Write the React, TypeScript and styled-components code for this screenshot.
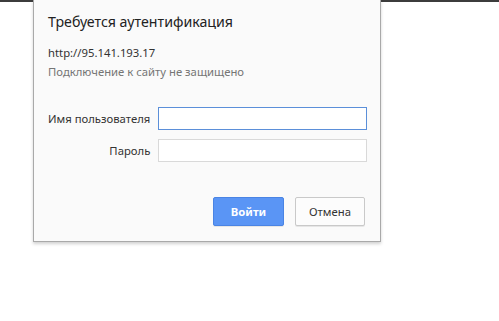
import React from 'react';
import styled, { createGlobalStyle } from 'styled-components';

const GlobalStyle = createGlobalStyle`
  html, body {
    margin: 0;
    padding: 0;
    background: #ffffff;
  }
  body {
    font-family: "Noto Sans", "Open Sans", Arial, sans-serif;
    width: 499px;
    height: 321px;
    overflow: hidden;
  }
`;

const Page = styled.div`
  position: relative;
  width: 499px;
  height: 321px;
  background: #ffffff;
`;

const TopBar = styled.div`
  height: 2px;
  background: #3c3c3c;
`;

const Dialog = styled.div`
  position: absolute;
  left: 33px;
  top: 0;
  width: 348px;
  height: 242px;
  background: #fafafa;
  border: 1px solid #a9a9a9;
  border-top: none;
  box-shadow: 0 2px 3px rgba(0, 0, 0, 0.18);
  padding: 12px 13px 0 14px;
  box-sizing: border-box;
  display: flex;
  flex-direction: column;
`;

const Title = styled.h1`
  margin: 0;
  font-size: 14.2px;
  line-height: 20px;
  font-weight: 400;
  color: #222222;
`;

const Origin = styled.div`
  margin-top: 13px;
  font-size: 11.3px;
  line-height: 16px;
  color: #333333;
`;

const Warning = styled.div`
  margin-top: 3px;
  font-size: 11.3px;
  line-height: 16px;
  color: #757575;
`;

const Form = styled.div`
  margin-top: 27px;
  display: grid;
  grid-template-columns: 1fr 209px;
  column-gap: 8px;
  row-gap: 9px;
  align-items: center;
`;

const Label = styled.label`
  font-size: 11.3px;
  color: #333333;
  text-align: right;
  white-space: nowrap;
`;

const Field = styled.input<{ $focused?: boolean }>`
  box-sizing: border-box;
  height: 23px;
  width: 209px;
  margin: 0;
  padding: 2px 4px;
  background: #ffffff;
  border: 1px solid ${p => (p.$focused ? '#5b8fd9' : '#d9d9d9')};
  border-radius: 0;
  outline: none;
  font-size: 12px;
`;

const Actions = styled.div`
  margin-top: 35px;
  display: flex;
  justify-content: flex-end;
  gap: 11px;
  padding-right: 2px;
`;

const Button = styled.button<{ $primary?: boolean }>`
  box-sizing: border-box;
  height: 29px;
  width: ${p => (p.$primary ? '71px' : '70px')};
  border-radius: 2px;
  font-family: inherit;
  font-size: 11.3px;
  font-weight: ${p => (p.$primary ? 700 : 400)};
  color: ${p => (p.$primary ? '#ffffff' : '#333333')};
  background: ${p => (p.$primary ? '#5a95f5' : '#fcfcfc')};
  border: 1px solid ${p => (p.$primary ? '#4a84e4' : '#c9c9c9')};
  box-shadow: 0 1px 0 rgba(0, 0, 0, 0.08);
  padding: 0;
`;

export default function App() {
  return (
    <Page>
      <GlobalStyle />
      <TopBar />
      <Dialog>
        <Title>Требуется аутентификация</Title>
        <Origin>http://95.141.193.17</Origin>
        <Warning>Подключение к сайту не защищено</Warning>
        <Form>
          <Label>Имя пользователя</Label>
          <Field $focused />
          <Label>Пароль</Label>
          <Field type="password" />
        </Form>
        <Actions>
          <Button $primary>Войти</Button>
          <Button>Отмена</Button>
        </Actions>
      </Dialog>
    </Page>
  );
}
